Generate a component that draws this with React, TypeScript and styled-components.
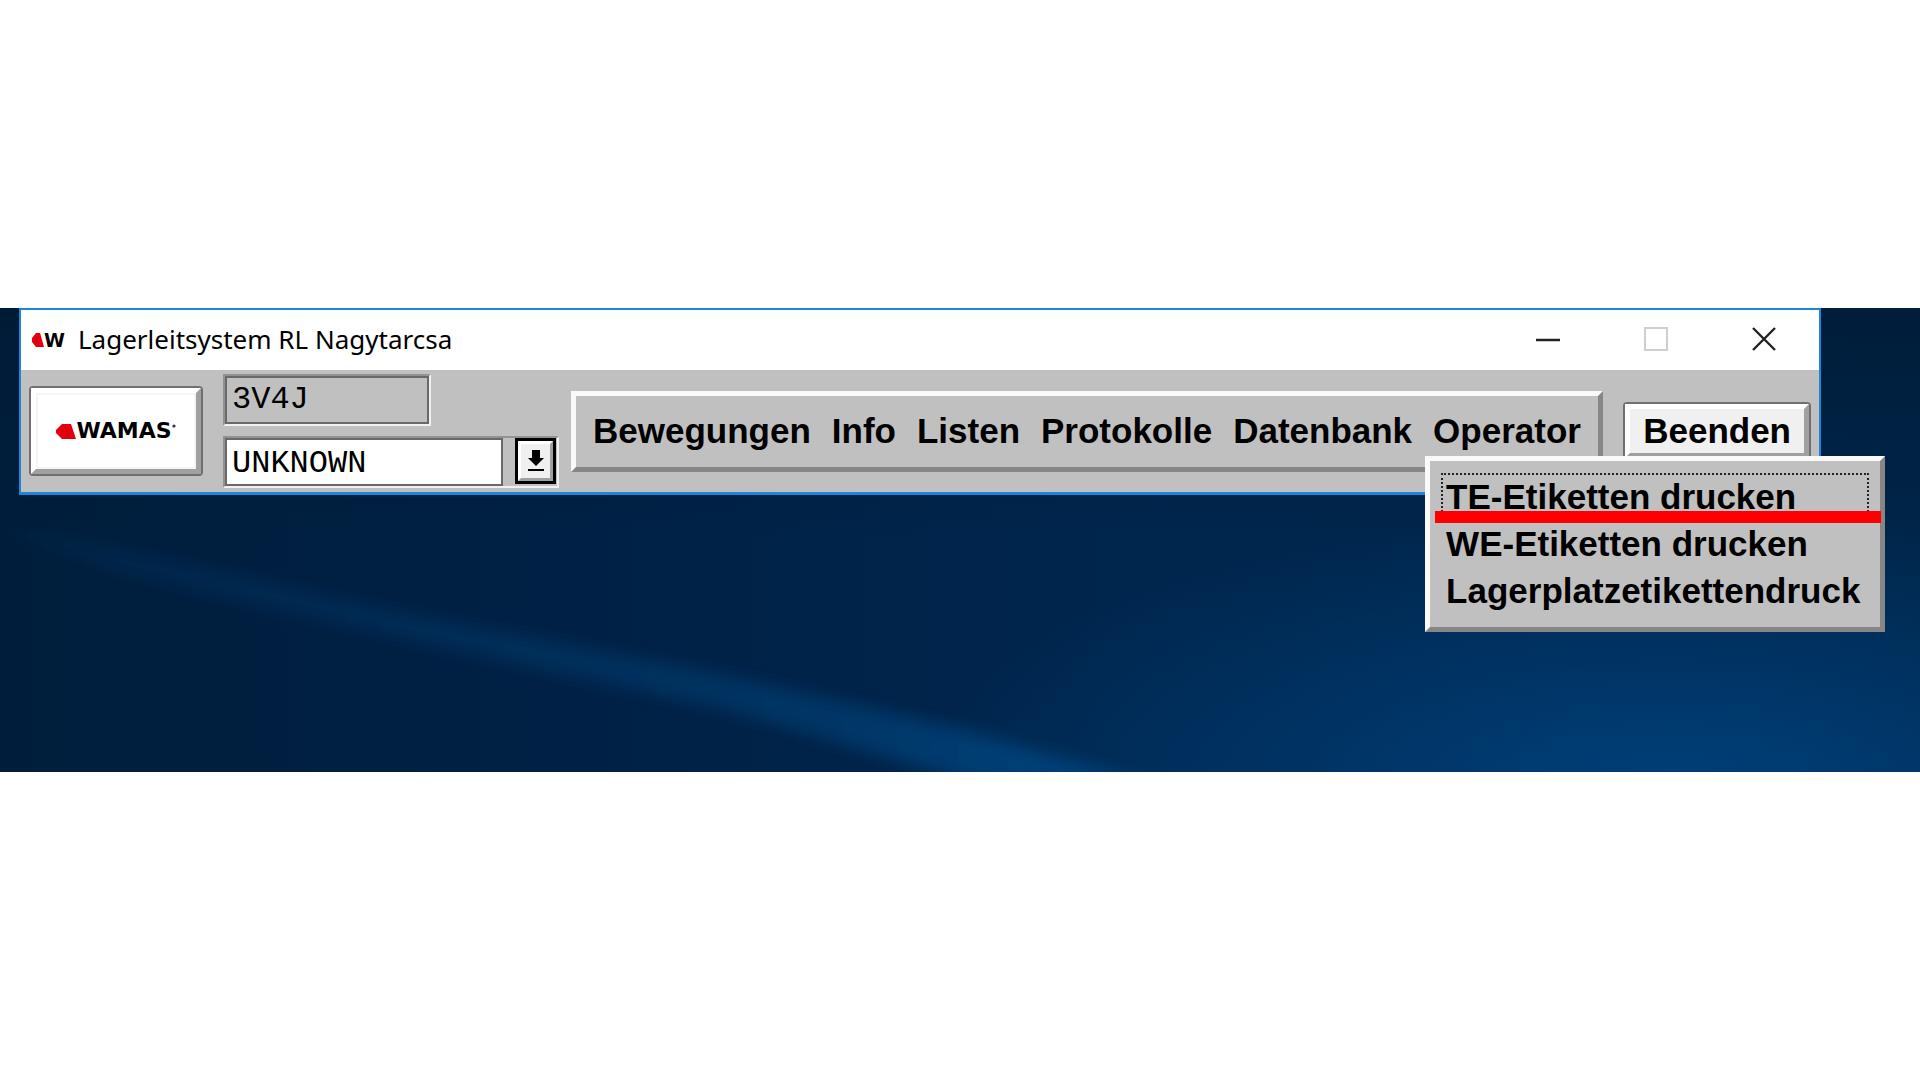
import React from "react";
import styled, { createGlobalStyle } from "styled-components";

const face = "#c0c0c0";
const uiFont = '"Liberation Sans", Arial, sans-serif';
const monoFont = '"Liberation Mono", "Courier New", monospace';

const GlobalStyle = createGlobalStyle`
  * { box-sizing: border-box; }
  body { margin: 0; background: #fff; color: #000; }
  button, select, input { margin: 0; padding: 0; border: 0; border-radius: 0; background: none; color: inherit; outline: 0; }
`;

const Page = styled.div`
  min-height: 100vh;
  display: flex;
  flex-direction: column;
  justify-content: center;
`;

const Desktop = styled.main`
  position: relative;
  min-height: 464px;
  padding: 0 99px 0 19px;
  background:
    radial-gradient(ellipse 760px 280px at 87% 104%, #00407a 0%, rgba(0, 64, 122, 0.6) 40%, rgba(0, 64, 122, 0) 100%),
    linear-gradient(180deg, rgba(0, 26, 52, 0.7) 0%, rgba(0, 26, 52, 0) 50%),
    linear-gradient(90deg, #001e3c 0%, #002145 30%, #00264e 60%, #002549 100%);
`;

const Beam = styled.svg`
  position: absolute;
  inset: 0;
  width: 100%;
  height: 100%;
`;

const Window = styled.section`
  position: relative;
  border: 2px solid #1c86dc;
  border-bottom-width: 3px;
  background: ${face};
`;

const TitleBar = styled.header`
  height: 60px;
  padding: 0 1px 0 11px;
  display: flex;
  align-items: center;
  background: #fff;
`;

const AppIcon = styled.span`
  display: flex;
  align-items: center;
  width: 33px;
  margin-right: 13px;
  font: bold 19px/20px "DejaVu Sans", sans-serif;
`;

const Title = styled.h1`
  flex: 1;
  margin: 0;
  padding-bottom: 2px;
  font: 400 26px/36px "Noto Sans", sans-serif;
`;

const CaptionButton = styled.button`
  width: 108px;
  height: 58px;
  margin-bottom: 2px;
  display: flex;
  align-items: center;
  justify-content: center;
`;

const ToolBar = styled.div`
  min-height: 122px;
  padding: 4px 8px;
  display: flex;
  align-items: center;
`;

const PushButton = styled.button`
  flex: none;
  border: 2px solid #707070;
  border-radius: 4px;
  background: #707070;
`;

const PushFace = styled.span<{ $light?: boolean }>`
  display: flex;
  align-items: center;
  justify-content: center;
  border: 5px solid;
  border-color: #fff #a0a0a0 #a0a0a0 #fff;
  background: ${(p) => (p.$light ? "#fff" : "#f0f0f0")};
  ${(p) => (p.$light ? "width: 170px; height: 86px; box-shadow: inset 0 0 0 2px #faf3f3;" : "padding: 0 13px;")}
  font: bold 35px/44px ${uiFont};
`;

const LogoText = styled.span`
  font: bold 22px/24px "DejaVu Sans", sans-serif;
`;

const Fields = styled.div`
  flex: none;
  display: flex;
  flex-direction: column;
  align-items: flex-start;
  gap: 10px;
  margin: 0 12px 0 20px;
`;

const Sunken = styled.div<{ $width: number }>`
  width: ${(p) => p.$width}px;
  height: 52px;
  display: flex;
  align-items: stretch;
  border: 2px solid;
  border-color: #929292 #f0f0f0 #f0f0f0 #929292;
`;

const inset = `
  flex: 1;
  min-width: 0;
  border: 2px solid #696969;
  font: 32px/44px ${monoFont};
`;

const CodeInput = styled.input`
  ${inset}
  padding: 0 0 0 5px;
  background: ${face};
`;

const PlaceSelect = styled.select`
  ${inset}
  appearance: none;
  padding: 2px 0 0 5px;
  background: #fff;
`;

const DropButton = styled.button`
  width: 41px;
  height: 46px;
  margin: 0 1px 0 12px;
  border: 3px solid #000;
`;

const DropFace = styled.span`
  display: flex;
  height: 40px;
  align-items: center;
  justify-content: center;
  border: 3px solid;
  border-color: #fff #a0a0a0 #a0a0a0 #fff;
  background: #f0f0f0;
`;

const raised = `
  border: 5px solid;
  border-color: #fafafa #868686 #868686 #fafafa;
  background: ${face};
`;

const MenuBar = styled.nav`
  ${raised}
  flex: none;
  height: 81px;
  padding: 0 7px;
  display: flex;
  align-items: center;
  gap: 1px;
`;

const MenuItem = styled.div`
  position: relative;
`;

const MenuButton = styled.button`
  padding: 0 10px;
  font: bold 35px/44px ${uiFont};
`;

const Popup = styled.ul`
  ${raised}
  position: absolute;
  z-index: 2;
  top: 47px;
  left: 2px;
  width: 460px;
  margin: 0;
  padding: 12px 11px 13px;
  list-style: none;
`;

const PopupItem = styled.li<{ $marked?: boolean }>`
  position: relative;
  ${(p) =>
    p.$marked &&
    `&::after {
      content: "";
      position: absolute;
      left: -6px;
      right: -12px;
      bottom: -3px;
      height: 12px;
      background: #ff0000;
    }`}
`;

const PopupButton = styled.button<{ $focused?: boolean }>`
  width: 100%;
  height: 47px;
  padding-left: 3px;
  border: 2px dotted ${(p) => (p.$focused ? "#222" : "transparent")};
  text-align: left;
  white-space: nowrap;
  font: bold 35px/43px ${uiFont};
`;

const Spacer = styled.div`
  flex: 1;
`;

const menus = ["Bewegungen", "Info", "Listen", "Protokolle", "Datenbank", "Operator"];
const operatorItems = ["TE-Etiketten drucken", "WE-Etiketten drucken", "Lagerplatzetikettendruck"];

export default function App() {
  return (
    <Page>
      <GlobalStyle />
      <Desktop>
        <Beam viewBox="0 0 1920 464" preserveAspectRatio="none" aria-hidden="true">
          <defs>
            <linearGradient id="beam" x1="0" y1="0" x2="1" y2="0">
              <stop offset="0" stopColor="#004680" stopOpacity="0.15" />
              <stop offset="0.35" stopColor="#004680" stopOpacity="0.3" />
              <stop offset="0.7" stopColor="#004680" stopOpacity="0.5" />
              <stop offset="1" stopColor="#004680" stopOpacity="0.9" />
            </linearGradient>
            <filter id="soft" x="-10%" y="-20%" width="120%" height="140%">
              <feGaussianBlur stdDeviation="8" />
            </filter>
          </defs>
          <path d="M0 218 L130 244 L410 306 L740 370 L980 426 L1150 476 L980 476 L720 400 L400 330 L120 264Z" fill="url(#beam)" filter="url(#soft)" />
        </Beam>
        <Window>
          <TitleBar>
            <AppIcon aria-hidden="true">
              <svg width="12" height="14" viewBox="0 0 12 14">
                <path d="M4 0H8L12 14H4L0 9V5Z" fill="#e2000f" />
              </svg>
              W
            </AppIcon>
            <Title>Lagerleitsystem RL Nagytarcsa</Title>
            <CaptionButton aria-label="Minimieren">
              <svg width="24" height="24" viewBox="0 0 24 24">
                <path d="M0 13H24" stroke="#222" strokeWidth="2.5" />
              </svg>
            </CaptionButton>
            <CaptionButton aria-label="Maximieren" disabled>
              <svg width="24" height="24" viewBox="0 0 24 24">
                <rect x="1" y="1" width="22" height="22" fill="none" stroke="#cfcfcf" strokeWidth="2" />
              </svg>
            </CaptionButton>
            <CaptionButton aria-label="Schließen">
              <svg width="24" height="24" viewBox="0 0 24 24">
                <path d="M1 1L23 23M23 1L1 23" stroke="#222" strokeWidth="2.4" />
              </svg>
            </CaptionButton>
          </TitleBar>
          <ToolBar>
            <PushButton>
              <PushFace $light>
                <svg width="20" height="15" viewBox="0 0 20 15" aria-hidden="true">
                  <path d="M6 0H15L20 15H6L0 9V6Z" fill="#e2000f" />
                </svg>
                <LogoText>WAMAS</LogoText>
                <svg width="4" height="15" viewBox="0 0 4 15" aria-hidden="true">
                  <circle cx="2" cy="2" r="1.6" fill="#333" />
                </svg>
              </PushFace>
            </PushButton>
            <Fields>
              <Sunken $width={208}>
                <CodeInput aria-label="Code" defaultValue="3V4J" readOnly />
              </Sunken>
              <Sunken $width={336}>
                <PlaceSelect aria-label="Arbeitsplatz" defaultValue="UNKNOWN">
                  <option>UNKNOWN</option>
                </PlaceSelect>
                <DropButton aria-label="Liste öffnen">
                  <DropFace>
                    <svg width="18" height="22" viewBox="0 0 18 22">
                      <path d="M5 0H13V8H17L9 16L1 8H5ZM1 19H17V21H1Z" fill="#000" />
                    </svg>
                  </DropFace>
                </DropButton>
              </Sunken>
            </Fields>
            <MenuBar>
              {menus.map((name) => (
                <MenuItem key={name}>
                  <MenuButton>{name}</MenuButton>
                  {name === "Operator" && (
                    <Popup>
                      {operatorItems.map((item, i) => (
                        <PopupItem key={item} $marked={i === 0}>
                          <PopupButton $focused={i === 0}>{item}</PopupButton>
                        </PopupItem>
                      ))}
                    </Popup>
                  )}
                </MenuItem>
              ))}
            </MenuBar>
            <Spacer />
            <PushButton>
              <PushFace>Beenden</PushFace>
            </PushButton>
          </ToolBar>
        </Window>
      </Desktop>
    </Page>
  );
}
